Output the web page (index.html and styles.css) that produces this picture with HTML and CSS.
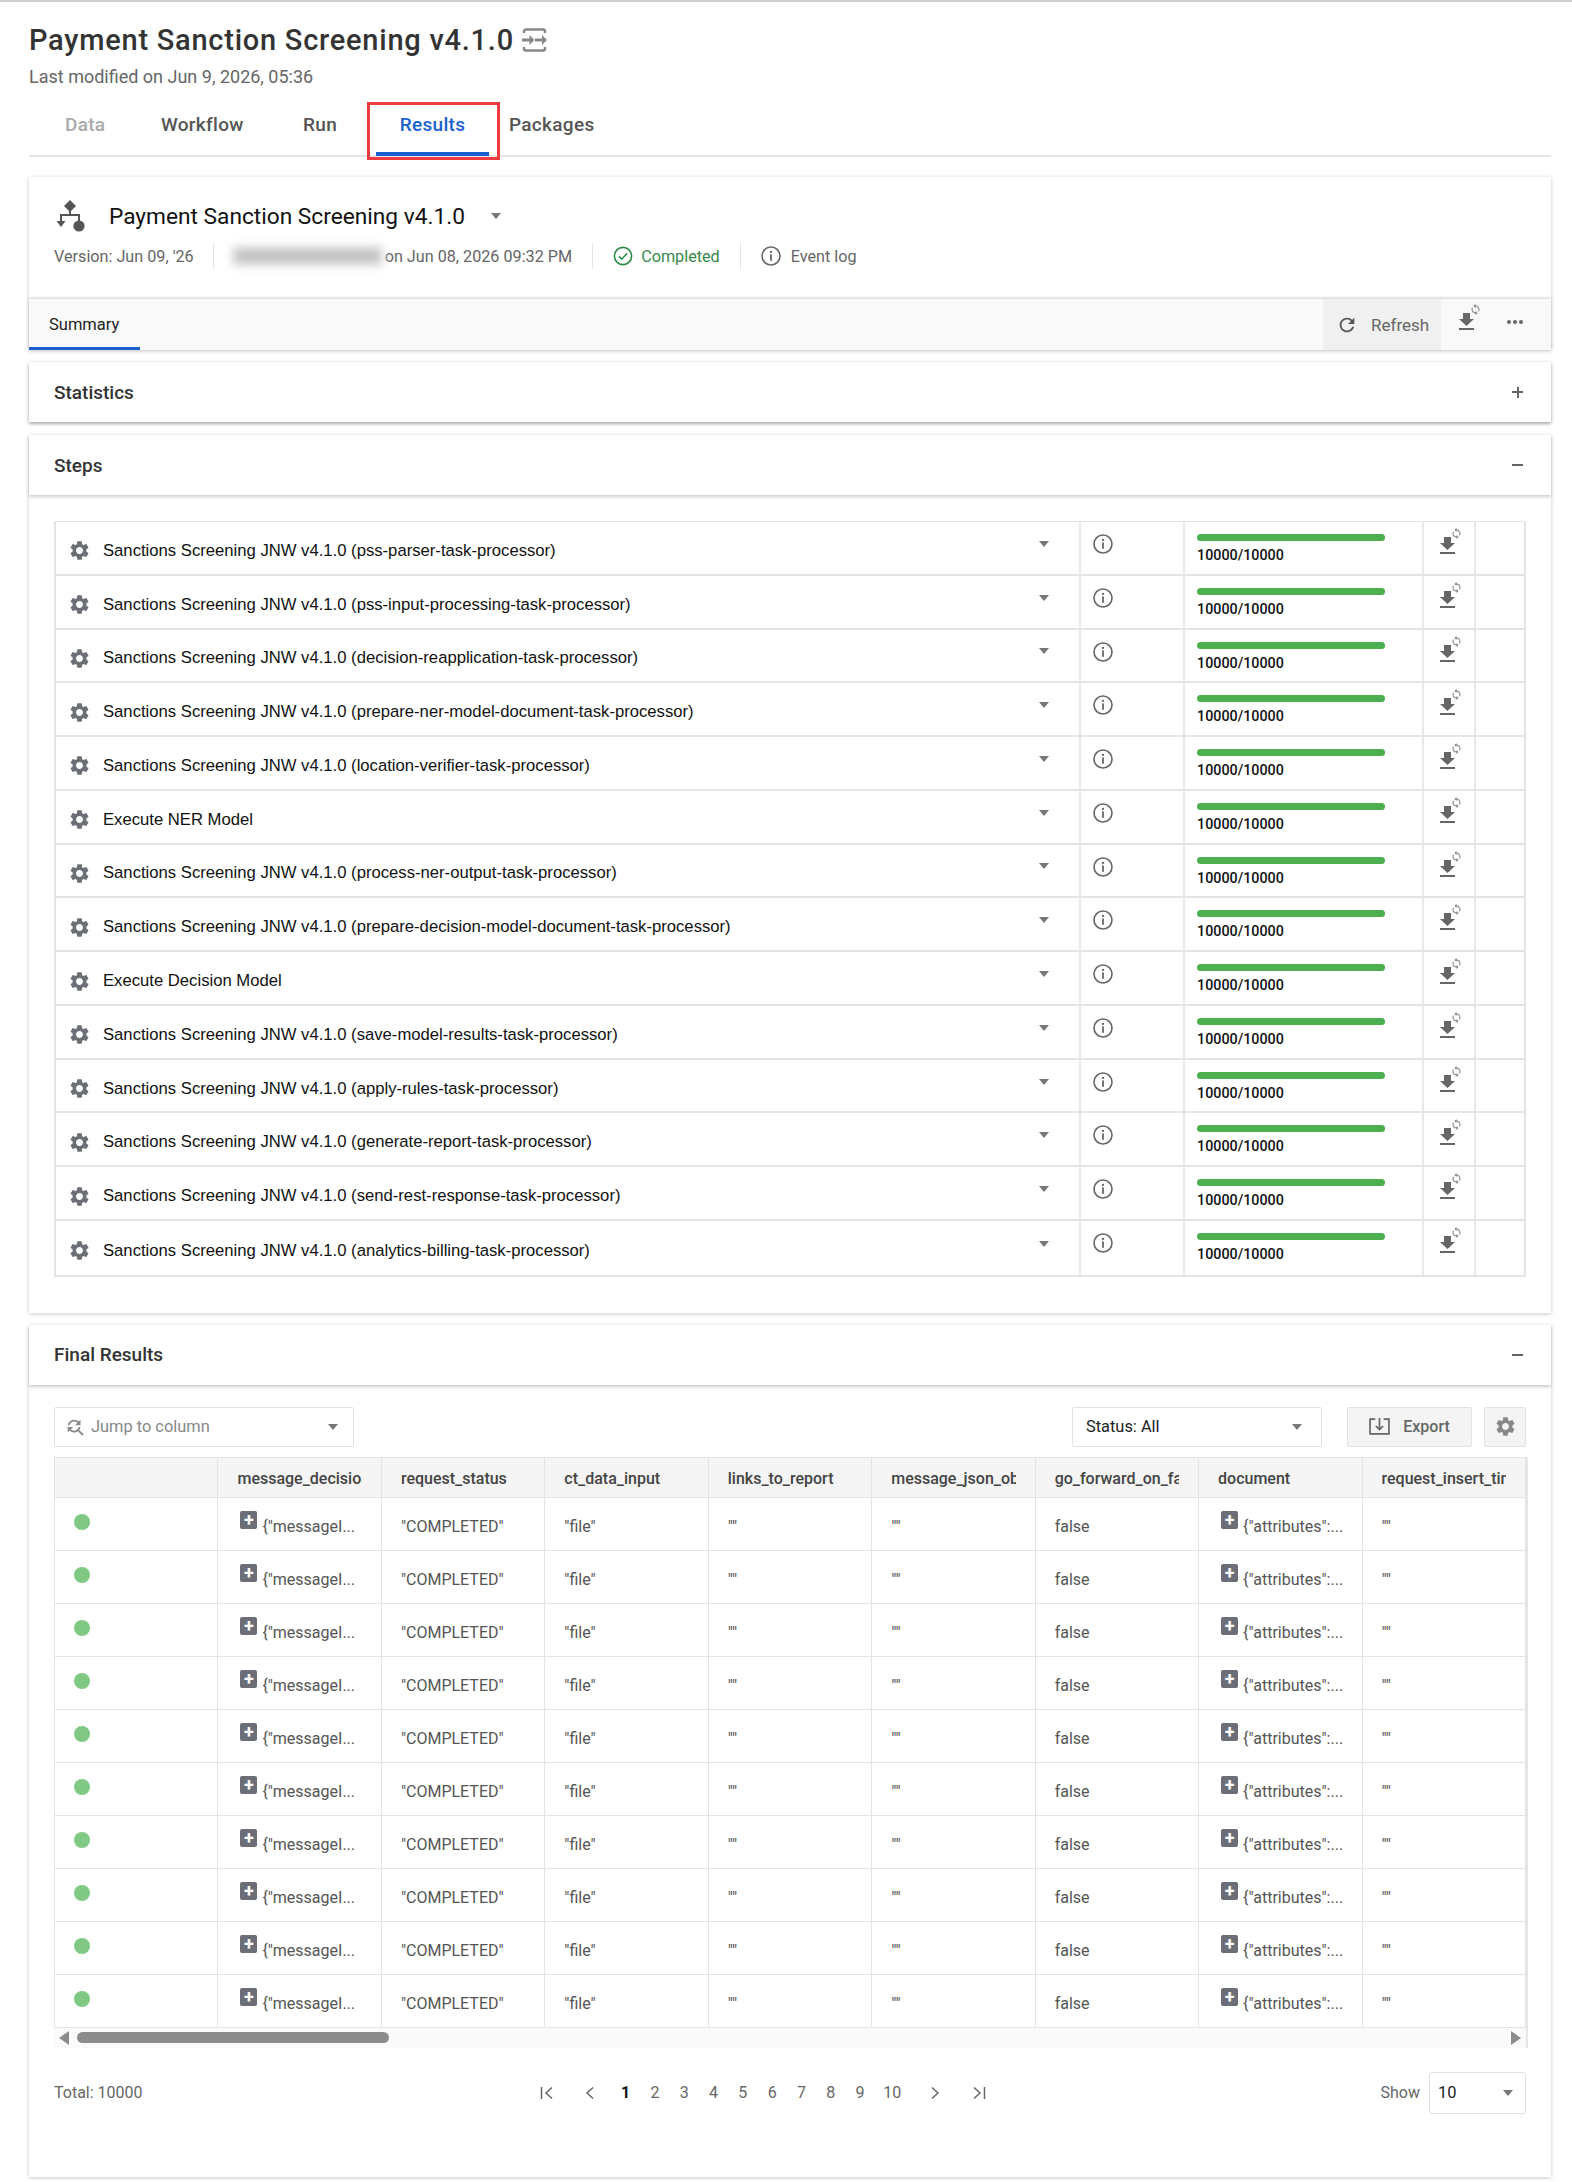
FILE: index.html
```html
<!DOCTYPE html>
<html>
	<head>
		<meta charset="UTF-8">
		<title>Payment Sanction Screening v4.1.0</title>
		<link rel="stylesheet" href="styles.css">
	</head>
	<body>
		<svg class="defs" width="0" height="0">
			<symbol id="gear" viewBox="0 0 24 24"><path d="M19.14 12.94c.04-.3.06-.61.06-.94 0-.32-.02-.64-.07-.94l2.03-1.58c.18-.14.23-.41.12-.61l-1.92-3.32c-.12-.22-.37-.29-.59-.22l-2.39.96c-.5-.38-1.03-.7-1.62-.94l-.36-2.54c-.04-.24-.24-.41-.48-.41h-3.84c-.24 0-.43.17-.47.41l-.36 2.54c-.59.24-1.13.57-1.62.94l-2.39-.96c-.22-.08-.47 0-.59.22L2.74 8.87c-.12.21-.08.47.12.61l2.03 1.58c-.05.3-.09.63-.09.94s.02.64.07.94l-2.03 1.58c-.18.14-.23.41-.12.61l1.92 3.32c.12.22.37.29.59.22l2.39-.96c.5.38 1.03.7 1.62.94l.36 2.54c.05.24.24.41.48.41h3.84c.24 0 .44-.17.47-.41l.36-2.54c.59-.24 1.13-.56 1.62-.94l2.39.96c.22.08.47 0 .59-.22l1.92-3.32c.12-.22.07-.47-.12-.61l-2.01-1.58zM12 15.6c-1.98 0-3.6-1.62-3.6-3.6s1.62-3.6 3.6-3.6 3.6 1.62 3.6 3.6-1.62 3.6-3.6 3.6z"/></symbol>
			<symbol id="info" viewBox="0 0 20 20"><circle cx="10" cy="10" r="9" fill="none" stroke="currentColor" stroke-width="1.6"/><rect x="9.1" y="8.4" width="1.8" height="6.4"/><circle cx="10" cy="5.9" r="1.15"/></symbol>
			<symbol id="dl_sync" viewBox="0 0 24 28"><rect x="1" y="24" width="15" height="2"/><polygon points="5,9 12,9 12,15 16,15 8.5,22 1,15 5,15"/><path transform="translate(11.500 -.5) scale(.5)" opacity=".85" d="M12 4V1L8 5l4 4V6c3.31 0 6 2.69 6 6 0 1.01-.25 1.97-.7 2.8l1.46 1.46C19.54 15.03 20 13.57 20 12c0-4.42-3.58-8-8-8zm0 14c-3.31 0-6-2.69-6-6 0-1.01.25-1.97.7-2.8L5.24 7.74C4.46 8.97 4 10.43 4 12c0 4.42 3.58 8 8 8v3l4-4-4-4v3z"/></symbol>
		</svg>

		<div class="page">
			<h1 class="page_title">Payment Sanction Screening v4.1.0
				<svg class="swap_icon" viewBox="0 0 25 24" width="25" height="24"><path d="M2 5V3.5a2 2 0 0 1 2-2h17a2 2 0 0 1 2 2V5M2 19v1.5a2 2 0 0 0 2 2h17a2 2 0 0 0 2-2V19" fill="none" stroke="#888" stroke-width="2.400"/><path d="M0 12h10M13 12h10" fill="none" stroke="#888" stroke-width="2.800"/><path d="M7.500 7l5 5-5 5zM20 7l5 5-5 5z" fill="#888"/></svg>
			</h1>
			<div class="modified">Last modified on Jun 9, 2026, 05:36</div>

			<nav class="tabs">
				<a class="tab tab_data">Data</a>
				<a class="tab tab_workflow">Workflow</a>
				<a class="tab tab_run">Run</a>
				<a class="tab tab_active">Results</a>
				<a class="tab tab_packages">Packages</a>
			</nav>

			<section class="card run_card">
				<div class="run_head">
					<div class="run_title">
						<svg class="flow_icon" viewBox="0 0 30 32" width="30" height="32" fill="#555"><polygon points="14,0 20,6 14,12 8,6"/><path d="M13 11h2v3h9v8h-2v-6H6v5H4v-7h9z"/><polygon points="0.5,21 9.5,21 5,27"/><circle cx="23" cy="26" r="5.6"/></svg>
						<span class="run_name">Payment Sanction Screening v4.1.0</span>
						<i class="caret run_caret"></i>
					</div>
					<div class="run_meta">
						<span class="meta_item meta_version">Version: Jun 09, '26</span>
						<span class="meta_item meta_user"><span class="blurred"></span>on Jun 08, 2026 09:32 PM</span>
						<span class="meta_item meta_status">
							<svg viewBox="0 0 20 20" width="20" height="20"><circle cx="10" cy="10" r="8.6" fill="none" stroke="#2e8b47" stroke-width="1.6"/><path d="M6 10.4l2.8 2.8L14 7.4" fill="none" stroke="#2e8b47" stroke-width="1.6"/></svg>
							Completed
						</span>
						<span class="meta_item meta_log"><svg class="info_icon"><use href="#info"/></svg>Event log</span>
					</div>
				</div>
				<div class="run_bar">
					<a class="summary_tab">Summary</a>
					<a class="refresh">
						<svg viewBox="0 0 24 24" width="22" height="22" fill="#555"><path d="M17.65 6.35C16.2 4.9 14.21 4 12 4c-4.42 0-7.99 3.58-7.99 8s3.57 8 7.99 8c3.73 0 6.84-2.55 7.73-6h-2.08c-.82 2.33-3.04 4-5.65 4-3.31 0-6-2.69-6-6s2.69-6 6-6c1.66 0 3.14.69 4.22 1.78L13 11h7V4l-2.35 2.35z"/></svg>
						Refresh
					</a>
					<svg class="dl_icon bar_dl"><use href="#dl_sync"/></svg>
					<span class="dots"><i></i><i></i><i></i></span>
				</div>
			</section>

			<section class="card stat_card">
				<div class="section_head"><span>Statistics</span><span class="plus"></span></div>
			</section>

			<section class="card steps_card">
				<div class="section_head"><span>Steps</span><span class="minus"></span></div>
				<div class="steps_body">
					<div class="steps">
						<div class="step"><div class="step_name"><svg class="gear"><use href="#gear"/></svg>Sanctions Screening JNW v4.1.0 (pss-parser-task-processor)<i class="caret step_caret"></i></div><div class="step_info"><svg class="info_icon"><use href="#info"/></svg></div><div class="step_progress"><div class="bar"></div><div class="count">10000/10000</div></div><div class="step_dl"><svg class="dl_icon"><use href="#dl_sync"/></svg></div><div></div></div>
						<div class="step"><div class="step_name"><svg class="gear"><use href="#gear"/></svg>Sanctions Screening JNW v4.1.0 (pss-input-processing-task-processor)<i class="caret step_caret"></i></div><div class="step_info"><svg class="info_icon"><use href="#info"/></svg></div><div class="step_progress"><div class="bar"></div><div class="count">10000/10000</div></div><div class="step_dl"><svg class="dl_icon"><use href="#dl_sync"/></svg></div><div></div></div>
						<div class="step"><div class="step_name"><svg class="gear"><use href="#gear"/></svg>Sanctions Screening JNW v4.1.0 (decision-reapplication-task-processor)<i class="caret step_caret"></i></div><div class="step_info"><svg class="info_icon"><use href="#info"/></svg></div><div class="step_progress"><div class="bar"></div><div class="count">10000/10000</div></div><div class="step_dl"><svg class="dl_icon"><use href="#dl_sync"/></svg></div><div></div></div>
						<div class="step"><div class="step_name"><svg class="gear"><use href="#gear"/></svg>Sanctions Screening JNW v4.1.0 (prepare-ner-model-document-task-processor)<i class="caret step_caret"></i></div><div class="step_info"><svg class="info_icon"><use href="#info"/></svg></div><div class="step_progress"><div class="bar"></div><div class="count">10000/10000</div></div><div class="step_dl"><svg class="dl_icon"><use href="#dl_sync"/></svg></div><div></div></div>
						<div class="step"><div class="step_name"><svg class="gear"><use href="#gear"/></svg>Sanctions Screening JNW v4.1.0 (location-verifier-task-processor)<i class="caret step_caret"></i></div><div class="step_info"><svg class="info_icon"><use href="#info"/></svg></div><div class="step_progress"><div class="bar"></div><div class="count">10000/10000</div></div><div class="step_dl"><svg class="dl_icon"><use href="#dl_sync"/></svg></div><div></div></div>
						<div class="step"><div class="step_name"><svg class="gear"><use href="#gear"/></svg>Execute NER Model<i class="caret step_caret"></i></div><div class="step_info"><svg class="info_icon"><use href="#info"/></svg></div><div class="step_progress"><div class="bar"></div><div class="count">10000/10000</div></div><div class="step_dl"><svg class="dl_icon"><use href="#dl_sync"/></svg></div><div></div></div>
						<div class="step"><div class="step_name"><svg class="gear"><use href="#gear"/></svg>Sanctions Screening JNW v4.1.0 (process-ner-output-task-processor)<i class="caret step_caret"></i></div><div class="step_info"><svg class="info_icon"><use href="#info"/></svg></div><div class="step_progress"><div class="bar"></div><div class="count">10000/10000</div></div><div class="step_dl"><svg class="dl_icon"><use href="#dl_sync"/></svg></div><div></div></div>
						<div class="step"><div class="step_name"><svg class="gear"><use href="#gear"/></svg>Sanctions Screening JNW v4.1.0 (prepare-decision-model-document-task-processor)<i class="caret step_caret"></i></div><div class="step_info"><svg class="info_icon"><use href="#info"/></svg></div><div class="step_progress"><div class="bar"></div><div class="count">10000/10000</div></div><div class="step_dl"><svg class="dl_icon"><use href="#dl_sync"/></svg></div><div></div></div>
						<div class="step"><div class="step_name"><svg class="gear"><use href="#gear"/></svg>Execute Decision Model<i class="caret step_caret"></i></div><div class="step_info"><svg class="info_icon"><use href="#info"/></svg></div><div class="step_progress"><div class="bar"></div><div class="count">10000/10000</div></div><div class="step_dl"><svg class="dl_icon"><use href="#dl_sync"/></svg></div><div></div></div>
						<div class="step"><div class="step_name"><svg class="gear"><use href="#gear"/></svg>Sanctions Screening JNW v4.1.0 (save-model-results-task-processor)<i class="caret step_caret"></i></div><div class="step_info"><svg class="info_icon"><use href="#info"/></svg></div><div class="step_progress"><div class="bar"></div><div class="count">10000/10000</div></div><div class="step_dl"><svg class="dl_icon"><use href="#dl_sync"/></svg></div><div></div></div>
						<div class="step"><div class="step_name"><svg class="gear"><use href="#gear"/></svg>Sanctions Screening JNW v4.1.0 (apply-rules-task-processor)<i class="caret step_caret"></i></div><div class="step_info"><svg class="info_icon"><use href="#info"/></svg></div><div class="step_progress"><div class="bar"></div><div class="count">10000/10000</div></div><div class="step_dl"><svg class="dl_icon"><use href="#dl_sync"/></svg></div><div></div></div>
						<div class="step"><div class="step_name"><svg class="gear"><use href="#gear"/></svg>Sanctions Screening JNW v4.1.0 (generate-report-task-processor)<i class="caret step_caret"></i></div><div class="step_info"><svg class="info_icon"><use href="#info"/></svg></div><div class="step_progress"><div class="bar"></div><div class="count">10000/10000</div></div><div class="step_dl"><svg class="dl_icon"><use href="#dl_sync"/></svg></div><div></div></div>
						<div class="step"><div class="step_name"><svg class="gear"><use href="#gear"/></svg>Sanctions Screening JNW v4.1.0 (send-rest-response-task-processor)<i class="caret step_caret"></i></div><div class="step_info"><svg class="info_icon"><use href="#info"/></svg></div><div class="step_progress"><div class="bar"></div><div class="count">10000/10000</div></div><div class="step_dl"><svg class="dl_icon"><use href="#dl_sync"/></svg></div><div></div></div>
						<div class="step"><div class="step_name"><svg class="gear"><use href="#gear"/></svg>Sanctions Screening JNW v4.1.0 (analytics-billing-task-processor)<i class="caret step_caret"></i></div><div class="step_info"><svg class="info_icon"><use href="#info"/></svg></div><div class="step_progress"><div class="bar"></div><div class="count">10000/10000</div></div><div class="step_dl"><svg class="dl_icon"><use href="#dl_sync"/></svg></div><div></div></div>
					</div>
				</div>
			</section>

			<section class="card final_card">
				<div class="section_head"><span>Final Results</span><span class="minus"></span></div>
				<div class="final_body">
					<div class="toolbar">
						<div class="select jump_select">
							<svg viewBox="0 0 24 24" width="22" height="22" fill="#8a8a8a"><path d="M11 6c1.38 0 2.63.56 3.54 1.46L12 10h6V4l-2.05 2.05C14.68 4.78 12.93 4 11 4c-3.53 0-6.43 2.61-6.92 6H6.1c.46-2.28 2.48-4 4.9-4zm5.64 9.14c.66-.9 1.12-1.97 1.28-3.14H15.9c-.46 2.28-2.48 4-4.9 4-1.38 0-2.63-.56-3.54-1.46L10 12H4v6l2.05-2.05C7.32 17.22 9.07 18 11 18c1.55 0 2.98-.51 4.14-1.36L20 21.49 21.49 20l-4.85-4.86z"/></svg>
							<span class="jump_text">Jump to column</span><i class="caret"></i>
						</div>
						<div class="select status_select"><span>Status: All</span><i class="caret"></i></div>
						<a class="btn export_btn">
							<svg viewBox="0 0 20 16" width="21" height="17" fill="none" stroke="#666" stroke-width="1.6"><path d="M6 1H1V15H19V1H14M10 0V10M6.5 7.5L10 11l3.5-3.5"/></svg>
							Export
						</a>
						<a class="btn gear_btn"><svg class="gear"><use href="#gear"/></svg></a>
					</div>

					<div class="table_wrap">
						<table class="results">
							<thead>
								<tr><th></th><th><div>message_decision</div></th><th><div>request_status</div></th><th><div>ct_data_input</div></th><th><div>links_to_report</div></th><th><div>message_json_object</div></th><th><div>go_forward_on_failure</div></th><th><div>document</div></th><th><div>request_insert_time</div></th></tr>
							</thead>
							<tbody>
								<tr><td><i class="dot"></i></td><td><div class="json"><b class="expand">+</b>{"messageI...</div></td><td>"COMPLETED"</td><td>"file"</td><td>""</td><td>""</td><td>false</td><td><div class="json"><b class="expand">+</b>{"attributes":...</div></td><td>""</td></tr>
								<tr><td><i class="dot"></i></td><td><div class="json"><b class="expand">+</b>{"messageI...</div></td><td>"COMPLETED"</td><td>"file"</td><td>""</td><td>""</td><td>false</td><td><div class="json"><b class="expand">+</b>{"attributes":...</div></td><td>""</td></tr>
								<tr><td><i class="dot"></i></td><td><div class="json"><b class="expand">+</b>{"messageI...</div></td><td>"COMPLETED"</td><td>"file"</td><td>""</td><td>""</td><td>false</td><td><div class="json"><b class="expand">+</b>{"attributes":...</div></td><td>""</td></tr>
								<tr><td><i class="dot"></i></td><td><div class="json"><b class="expand">+</b>{"messageI...</div></td><td>"COMPLETED"</td><td>"file"</td><td>""</td><td>""</td><td>false</td><td><div class="json"><b class="expand">+</b>{"attributes":...</div></td><td>""</td></tr>
								<tr><td><i class="dot"></i></td><td><div class="json"><b class="expand">+</b>{"messageI...</div></td><td>"COMPLETED"</td><td>"file"</td><td>""</td><td>""</td><td>false</td><td><div class="json"><b class="expand">+</b>{"attributes":...</div></td><td>""</td></tr>
								<tr><td><i class="dot"></i></td><td><div class="json"><b class="expand">+</b>{"messageI...</div></td><td>"COMPLETED"</td><td>"file"</td><td>""</td><td>""</td><td>false</td><td><div class="json"><b class="expand">+</b>{"attributes":...</div></td><td>""</td></tr>
								<tr><td><i class="dot"></i></td><td><div class="json"><b class="expand">+</b>{"messageI...</div></td><td>"COMPLETED"</td><td>"file"</td><td>""</td><td>""</td><td>false</td><td><div class="json"><b class="expand">+</b>{"attributes":...</div></td><td>""</td></tr>
								<tr><td><i class="dot"></i></td><td><div class="json"><b class="expand">+</b>{"messageI...</div></td><td>"COMPLETED"</td><td>"file"</td><td>""</td><td>""</td><td>false</td><td><div class="json"><b class="expand">+</b>{"attributes":...</div></td><td>""</td></tr>
								<tr><td><i class="dot"></i></td><td><div class="json"><b class="expand">+</b>{"messageI...</div></td><td>"COMPLETED"</td><td>"file"</td><td>""</td><td>""</td><td>false</td><td><div class="json"><b class="expand">+</b>{"attributes":...</div></td><td>""</td></tr>
								<tr><td><i class="dot"></i></td><td><div class="json"><b class="expand">+</b>{"messageI...</div></td><td>"COMPLETED"</td><td>"file"</td><td>""</td><td>""</td><td>false</td><td><div class="json"><b class="expand">+</b>{"attributes":...</div></td><td>""</td></tr>
							</tbody>
						</table>
						<div class="scrollbar"><i class="arrow_left"></i><div class="thumb"></div><i class="arrow_right"></i></div>
					</div>

					<div class="table_footer">
						<span class="total">Total: 10000</span>
						<div class="pager">
							<svg class="pg_first" viewBox="0 0 14 14" width="14" height="14"><path d="M1.5 1v12M12 1.5L6 7l6 5.500" fill="none" stroke="#666" stroke-width="1.500"/></svg>
							<svg class="pg_prev" viewBox="0 0 10 14" width="10" height="14"><path d="M8 1.500L2 7l6 5.500" fill="none" stroke="#666" stroke-width="1.500"/></svg>
							<span class="pg_nums"><a class="pg_active">1</a><a>2</a><a>3</a><a>4</a><a>5</a><a>6</a><a>7</a><a>8</a><a>9</a><a class="pg_ten">10</a></span>
							<svg class="pg_next" viewBox="0 0 10 14" width="10" height="14"><path d="M2 1.500L8 7l-6 5.500" fill="none" stroke="#666" stroke-width="1.500"/></svg>
							<svg class="pg_last" viewBox="0 0 14 14" width="14" height="14"><path d="M12.500 1v12M2 1.500L8 7l-6 5.500" fill="none" stroke="#666" stroke-width="1.500"/></svg>
						</div>
						<div class="show_box">
							<span class="show_label">Show</span>
							<div class="select show_select"><span>10</span><i class="caret"></i></div>
						</div>
					</div>
				</div>
			</section>
		</div>
	</body>
</html>
```

FILE: styles.css
```css
body {
	margin: 0;
	font-family: Roboto, "Liberation Sans", sans-serif;
	color: #333;
	background: #fff;
}

.defs {
	position: absolute;
}

.page {
	border-top: 2px solid #d0d0d0;
	padding: 0 21px 0 29px;
	height: 2180px;
	box-sizing: border-box;
	overflow: hidden;
}

.page_title {
	display: flex;
	align-items: center;
	gap: 8px;
	height: 40px;
	margin: 18px 0 0;
	font-size: 29px;
	font-weight: 500;
	letter-spacing: .75px;
	color: #333;
}

.modified {
	margin-top: 5px;
	height: 24px;
	line-height: 24px;
	font-size: 18px;
	color: #666;
}

/* top tabs */
.tabs {
	display: flex;
	height: 56px;
	margin-top: 12px;
	border-bottom: 2px solid #e6e6e6;
	box-sizing: border-box;
	padding-left: 36px;
}

.tab {
	display: block;
	font-size: 19px;
	font-weight: 500;
	letter-spacing: .3px;
	line-height: 48px;
	color: #555;
}

.tab_data {
	color: #aaa;
	width: 96px;
}

.tab_workflow {
	width: 142px;
}

.tab_run {
	width: 73px;
}

.tab_active {
	position: relative;
	width: 113px;
	text-align: center;
	color: #1a5fd0;
	border-bottom: 4px solid #1a5fd0;
	box-sizing: border-box;
	height: 55px;
}

.tab_active::after {
	content: "";
	position: absolute;
	left: -9px;
	right: -11px;
	top: 1px;
	bottom: -8px;
	border: 3px solid #ee3b3f;
}

.tab_packages {
	margin-left: 20px;
}

/* cards */
.card {
	background: #fff;
	box-shadow: 0 1px 4px rgba(0, 0, 0, .22);
}

.run_card {
	margin-top: 20px;
}

.run_head {
	height: 122px;
	box-sizing: border-box;
	padding: 23px 0 0 25px;
}

.run_title {
	display: flex;
	align-items: center;
	height: 32px;
}

.flow_icon {
	margin: 0 2px 0 2px;
}

.run_name {
	margin-left: 21px;
	font-size: 22.700px;
	color: #111;
}

.caret {
	display: inline-block;
	width: 0;
	height: 0;
	border-style: solid;
	border-width: 6px 5.500px 0;
	border-color: #777 transparent transparent;
}

.run_caret {
	margin-left: 26px;
}

.run_meta {
	display: flex;
	align-items: center;
	margin-top: 11px;
	height: 26px;
	font-size: 16.200px;
	color: #666;
}

.meta_item {
	display: flex;
	align-items: center;
	height: 26px;
	border-right: 1px solid #e4e4e4;
	padding-right: 20px;
	margin-right: 20px;
}

.meta_version {
	padding-right: 19px;
}

.meta_status {
	color: #37874b;
	gap: 8px;
}

.meta_log {
	border: 0;
	gap: 10px;
}

.info_icon {
	width: 20px;
	height: 20px;
	fill: #666;
	color: #666;
}

.blurred {
	display: block;
	width: 153px;
	height: 22px;
	margin: 0 1px 0 -3px;
	background: #c4c4c4;
	box-shadow: inset 0 0 0 4px #e8e8e8;
	filter: blur(4px);
}

.run_bar {
	display: flex;
	align-items: center;
	height: 51px;
	background: #f9f9f9;
	box-shadow: 0 -1px 3px rgba(0, 0, 0, .2);
}

.summary_tab {
	width: 111px;
	height: 51px;
	box-sizing: border-box;
	padding-left: 20px;
	line-height: 51px;
	font-size: 16.500px;
	color: #222;
	border-bottom: 3px solid #1a5fd0;
}

.refresh {
	display: flex;
	align-items: center;
	gap: 13px;
	width: 118px;
	height: 51px;
	box-sizing: border-box;
	padding-left: 13px;
	margin-left: auto;
	background: #f0f0f0;
	font-size: 17px;
	color: #666;
}

.dl_icon {
	width: 24px;
	height: 28px;
	fill: #666;
}

.bar_dl {
	margin: -13px 0 0 17px;
}

.dots {
	display: flex;
	gap: 2px;
	margin: -6px 28px 0 25px;
}

.dots i {
	width: 4px;
	height: 4px;
	border-radius: 50%;
	background: #666;
}

.stat_card {
	margin-top: 12px;
}

.steps_card {
	margin-top: 13px;
}

.final_card {
	margin-top: 12px;
}

.section_head {
	display: flex;
	align-items: center;
	justify-content: space-between;
	height: 60px;
	padding: 0 28px 0 25px;
	font-size: 19px;
	font-weight: 500;
	color: #333;
	box-shadow: 0 2px 3px rgba(0, 0, 0, .2);
}

.plus,
.minus {
	position: relative;
	display: block;
	width: 11px;
	height: 2px;
	background: #666;
}

.plus::after {
	content: "";
	position: absolute;
	left: 4.500px;
	top: -4.500px;
	width: 2px;
	height: 11px;
	background: #666;
}

/* steps */
.steps_body {
	padding: 26px 25px 36px;
}

.steps {
	border: 2px solid #e4e4e4;
	border-top-width: 1px;
}

.step {
	display: grid;
	grid-template-columns: 1025px 104px 239px 52px 1fr;
	height: 53.780px;
	box-sizing: border-box;
	border-bottom: 2px solid #e4e4e4;
	font-size: 16.670px;
	color: #111;
	font-family: "Liberation Sans", Arial, sans-serif;
}

.step:last-child {
	border-bottom: 0;
}

.step > div {
	border-right: 2px solid #e8e8e8;
}

.step > div:last-child {
	border-right: 0;
}

.step_name {
	display: flex;
	align-items: center;
	padding: 6px 0 0 12px;
}

.gear {
	width: 23px;
	height: 23px;
	fill: #6d6f76;
	margin-right: 12px;
}

.step_caret {
	margin: -14px 30px 0 auto;
}

.step_info {
	padding: 12px 0 0 12px;
	box-sizing: border-box;
}

.step_progress {
	padding: 12px 0 0 12px;
	box-sizing: border-box;
}

.bar {
	width: 188px;
	height: 7px;
	border-radius: 4px;
	background: #4caf50;
}

.count {
	margin-top: 6px;
	font-family: Roboto, sans-serif;
	font-size: 14.300px;
	font-weight: 500;
	line-height: 17px;
	color: #111;
}

.step_dl {
	padding: 6px 0 0 15px;
	box-sizing: border-box;
}

/* final results */
.final_body {
	padding: 22px 25px 0;
	height: 792px;
	box-sizing: border-box;
}

.toolbar {
	display: flex;
	align-items: center;
	height: 40px;
}

.select {
	display: flex;
	align-items: center;
	height: 40px;
	box-sizing: border-box;
	border: 1px solid #e2e2e2;
	border-radius: 2px;
	background: #fff;
	font-size: 16.400px;
}

.select .caret {
	margin-left: auto;
}

.jump_select {
	width: 300px;
	padding: 0 15px 0 9px;
	color: #888;
}

.jump_text {
	margin-left: 5px;
}

.status_select {
	width: 250px;
	margin-left: auto;
	padding: 0 19px 0 13px;
	color: #222;
}

.btn {
	display: flex;
	align-items: center;
	justify-content: center;
	height: 40px;
	box-sizing: border-box;
	background: #f4f4f4;
	border: 1px solid #e2e2e2;
	border-radius: 2px;
}

.export_btn {
	width: 125px;
	margin-left: 25px;
	gap: 13px;
	font-size: 16px;
	font-weight: 500;
	color: #666;
}

.gear_btn {
	width: 42px;
	margin-left: 12px;
}

.gear_btn .gear {
	margin: 0;
	fill: #888;
}

.table_wrap {
	margin: 10px -2px 0 0;
	border-right: 2px solid #e6e6e6;
}

.results {
	table-layout: fixed;
	width: 100%;
	border-collapse: collapse;
	font-size: 16px;
	color: #555;
}

.results th,
.results td {
	border: 1px solid #e4e4e4;
	padding: 0 19px;
	overflow: hidden;
	white-space: nowrap;
	text-align: left;
}

.results th {
	height: 40px;
	padding-top: 2px;
	box-sizing: border-box;
	background: #f5f5f5;
	font-size: 16px;
	font-weight: 500;
	color: #444;
}

.results th div {
	overflow: hidden;
}

.results td {
	height: 53px;
	box-sizing: border-box;
	vertical-align: top;
	line-height: 24px;
	padding-top: 17px;
}

.results td .json {
	margin-left: 3px;
	margin-right: -19px;
	display: flex;
}

.dot {
	display: block;
	width: 16px;
	height: 16px;
	margin-top: -1px;
	border-radius: 50%;
	background: #7fc984;
}

.expand {
	display: block;
	flex: none;
	width: 17px;
	height: 18px;
	margin: -4px 5px 0 0;
	border-radius: 2px;
	background: #6b6e76;
	color: #fff;
	font-size: 18px;
	line-height: 17px;
	text-align: center;
}

.scrollbar {
	display: flex;
	align-items: center;
	height: 20px;
	background: #fafafa;
	padding: 0 5px;
}

.thumb {
	width: 312px;
	height: 11px;
	margin-left: 8px;
	border-radius: 6px;
	background: #8c8c8c;
}

.arrow_left,
.arrow_right {
	width: 0;
	height: 0;
	border-style: solid;
	border-color: transparent;
	border-width: 7px 0;
}

.arrow_left {
	border-right: 10px solid #8c8c8c;
}

.arrow_right {
	margin-left: auto;
	border-left: 10px solid #8c8c8c;
}

.table_footer {
	display: flex;
	align-items: center;
	height: 42px;
	margin-top: 24px;
	font-size: 16px;
	color: #666;
}

.total {
	width: 486px;
}

.pager {
	display: flex;
	align-items: center;
}

.pg_prev {
	margin-left: 31px;
}

.pg_nums {
	display: flex;
	margin-left: 16px;
	font-size: 16px;
}

.pg_nums a {
	width: 29.300px;
	text-align: center;
}

.pg_nums .pg_ten {
	width: 35px;
}

.pg_active {
	font-weight: 700;
	color: #111;
}

.pg_next {
	margin-left: 20px;
}

.pg_last {
	margin-left: 32px;
}

.show_box {
	display: flex;
	align-items: center;
	margin-left: auto;
}

.show_select {
	width: 97px;
	height: 42px;
	margin-left: 9px;
	padding: 0 12px 0 8px;
	color: #222;
	border-radius: 3px;
}
```
